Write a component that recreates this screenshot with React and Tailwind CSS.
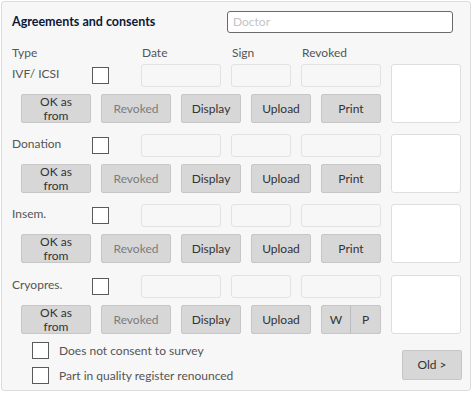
import React from "react";

const font = { fontFamily: "Lato, 'Open Sans', sans-serif" };

function Btn({ children, disabled, className = "" }) {
  return (
    <div
      className={
        "flex items-center justify-center rounded-[2px] border border-[#c6c6c6] bg-[#d7d7d7] text-[12px] leading-[14px] text-center " +
        (disabled ? "text-[#7c7c7c] " : "text-[#333333] ") +
        className
      }
    >
      {children}
    </div>
  );
}

function Box({ className = "" }) {
  return <div className={"rounded-[3px] border border-[#e2e2e2] bg-[#f7f7f7] " + className} />;
}

function Check({ className = "" }) {
  return <div className={"h-[17px] w-[17px] border border-[#5a5a5a] bg-white " + className} />;
}

function Section({ label, mt, cryo }) {
  return (
    <div className={"flex " + mt}>
      <div className="flex w-[369px] flex-col">
        <div className="flex h-[23px] items-start">
          <div className="w-[80px] pt-[2px] text-[12px] leading-[16px] text-[#555555]">{label}</div>
          <Check className="mt-[3px]" />
          <Box className="ml-[32px] h-[23px] w-[80px]" />
          <Box className="ml-[10px] h-[23px] w-[60px]" />
          <Box className="ml-[10px] h-[23px] w-[80px]" />
        </div>
        <div className="mt-[7px] flex h-[29px] gap-[10px] pl-[9px]">
          <Btn className="w-[70px]">
            <div className="flex flex-col">
              <span>OK as</span>
              <span>from</span>
            </div>
          </Btn>
          <Btn disabled className="w-[70px]">Revoked</Btn>
          <Btn className="w-[60px]">Display</Btn>
          <Btn className="w-[60px]">Upload</Btn>
          {cryo ? (
            <div className="flex w-[60px] rounded-[2px] border border-[#c6c6c6] bg-[#d7d7d7] text-[12px] text-[#333333]">
              <div className="flex w-[29px] items-center justify-center border-r border-[#bdbdbd]">W</div>
              <div className="flex flex-1 items-center justify-center">P</div>
            </div>
          ) : (
            <Btn className="w-[60px]">Print</Btn>
          )}
        </div>
      </div>
      <div className="ml-[10px] h-[59px] w-[70px] rounded-[3px] border border-[#dedede] bg-white" />
    </div>
  );
}

export default function App() {
  return (
    <div className="h-[394px] w-[472px] bg-white pl-[1px] pt-[1px]" style={font}>
      <div className="h-[390px] w-[470px] rounded-[3px] border border-[#dcdcdc] bg-[#f7f7f7] pl-[10px] pt-[9px]">
        <div className="flex h-[22px] items-center">
          <div className="w-[215px] text-[12.5px] font-bold leading-[16px] text-[#0b1838]">Agreements and consents</div>
          <div className="flex h-[22px] w-[226px] items-center rounded-[3px] border border-[#6a6a6a] bg-white pl-[5px] text-[12px] text-[#c4c4c4]">
            Doctor
          </div>
        </div>
        <div className="mt-[12px] flex h-[16px] text-[12px] leading-[16px] text-[#555555]">
          <div className="w-[130px]">Type</div>
          <div className="w-[90px]">Date</div>
          <div className="w-[70px]">Sign</div>
          <div>Revoked</div>
        </div>
        <div className="mt-[3px]">
          <Section label="IVF/ ICSI" mt="" />
          <Section label="Donation" mt="mt-[11px]" />
          <Section label="Insem." mt="mt-[11px]" />
          <Section label="Cryopres." mt="mt-[12px]" cryo />
        </div>
        <div className="flex">
          <div className="flex flex-col pl-[20px] pt-[8px] text-[12px] leading-[17px] text-[#555555]">
            <div className="flex items-center">
              <Check />
              <span className="ml-[10px]">Does not consent to survey</span>
            </div>
            <div className="mt-[8px] flex items-center">
              <Check />
              <span className="ml-[10px]">Part in quality register renounced</span>
            </div>
          </div>
          <div className="ml-auto mr-[8px] pt-[16px]">
            <Btn className="h-[30px] w-[60px]">Old &gt;</Btn>
          </div>
        </div>
      </div>
    </div>
  );
}
